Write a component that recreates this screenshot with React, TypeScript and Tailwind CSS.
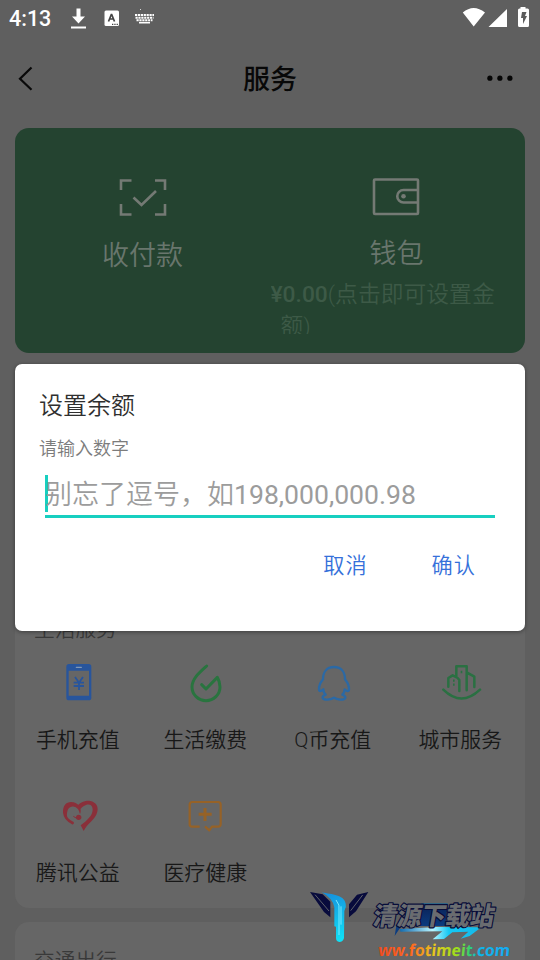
import React, { useState } from 'react'

const PhoneIcon = () => (
  <svg width="48" height="44" viewBox="164 153 144 132" fill="none">
    <path fillRule="evenodd" fill="#28559c" d="M206 162h59q8 0 8 8v93q0 8-8 8h-59q-8 0-8-8v-93q0-8 8-8zM205 182v75h61v-75z" />
    <path d="M228 172h15" stroke="#8298b5" strokeWidth="4" strokeLinecap="round" />
    <path d="M224 201l12 17 12-17M220 218h31M220 228h31M236 218v22" stroke="#28559c" strokeWidth="5.500" />
  </svg>
)

const DropIcon = () => (
  <svg width="48" height="44" viewBox="547 153 144 132" fill="none" stroke="#29743f" strokeWidth="9" strokeLinecap="round" strokeLinejoin="round">
    <path d="M621 168C600 187 577 206 577 231a42 41 0 0 0 84 0c0-12-3-21-8-29l-34 35-13-13" />
  </svg>
)

const PenguinIcon = () => (
  <svg width="48" height="44" viewBox="119 153 144 132" fill="none" stroke="#2b69a5" strokeWidth="7" strokeLinejoin="round" strokeLinecap="round">
    <path d="M191 171c-23 0-33 17-33 37-7 9-13 22-12 31 1 7 7 4 13-1 0 7 2 11 7 16-7 3-10 6-9 10 3 7 27 6 34-1 7 7 31 8 34 1 1-4-2-7-9-10 5-5 7-9 7-16 6 5 12 8 13 1 1-9-5-22-12-31 0-20-10-37-33-37z" />
  </svg>
)

const CityIcon = () => (
  <svg width="48" height="44" viewBox="502 153 144 132" fill="none" stroke="#2a7042" strokeWidth="7.500" strokeLinecap="round" strokeLinejoin="round">
    <path d="M521 239q54 53 110 0" />
    <path d="M536 230v-26l13-8 15 8 5 6v33M560 199v-30h31v72M591 187l23 13v31" />
    <path d="M573 186h5M550 212h5M550 224h5" strokeWidth="7" strokeLinecap="butt" />
  </svg>
)

const HeartIcon = () => (
  <svg width="48" height="44" viewBox="164 42 144 132">
    <path fill="none" stroke="#8a303a" strokeWidth="8" strokeLinecap="round" d="M217 129C203 122 193 110 192 97" />
    <path fill="#8a303a" d="M188 98C187 78 197 66 212 66c11 0 18 4 23 10 7 8 8 18 4 27-2-12-7-21-18-23-15-2-22 9-21 30zM232 77c8-10 25-16 38-14 17 3 25 17 21 32-6 25-31 35-41 58l-9-17c19-15 36-30 36-47 0-13-9-18-20-14-9 3-16 10-20 17 0-7-1-11-5-15z" />
    <circle cx="235" cy="112" r="8" fill="#8a303a" />
    <path d="M219 109q8 8 18 4" stroke="#8a303a" strokeWidth="3" fill="none" />
  </svg>
)

const MedicalIcon = () => (
  <svg width="48" height="44" viewBox="547 42 144 132" fill="none" stroke="#966227">
    <path d="M600 140h-23q-7 0-7-7V74q0-8 8-8h77q8 0 8 8v58q0 8-8 8h-18l-8 11-13-12" strokeWidth="6.500" strokeLinejoin="round" />
    <path d="M616 84v39M597 103h39" strokeWidth="9" />
  </svg>
)

const services = [
  { name: '手机充值', icon: <PhoneIcon /> },
  { name: '生活缴费', icon: <DropIcon /> },
  { name: 'Q币充值', icon: <PenguinIcon /> },
  { name: '城市服务', icon: <CityIcon /> },
  { name: '腾讯公益', icon: <HeartIcon /> },
  { name: '医疗健康', icon: <MedicalIcon /> },
]

const StatusBar = () => (
  <div className="flex h-[38px] shrink-0 items-center justify-between pl-[9px] pr-[9px] text-white">
    <div className="flex items-center">
      <span className="w-[62px] text-[21.500px] font-medium leading-[38px]">4:13</span>
      <svg width="86" height="38" viewBox="0 0 86 38" fill="white">
        <path d="M5.500 8.500h4v8h4.500L7.500 23.500 1 16.500h4.500zM0 26.500h15v2H0z" />
        <rect x="33.500" y="10.500" width="14.500" height="15.500" rx="1.500" />
        <path d="M37.500 21.500l2.800-7h.4l2.800 7M38.700 19h3.800" stroke="#444" strokeWidth="1.700" fill="none" />
        <path d="M41 24.300h6" stroke="#444" strokeWidth="1.200" strokeDasharray="1.300 1" />
        <path d="M64 15h19M64.500 17.700h18M65.500 20.300h16" stroke="white" strokeWidth="1.900" strokeDasharray="2.200 .7" />
        <path d="M68 22.700h11" stroke="white" strokeWidth="1.600" />
        <circle cx="69.500" cy="9.500" r=".5" />
      </svg>
    </div>
    <svg width="70" height="38" viewBox="0 0 70 38" fill="white">
      <path d="M1.800 12.500Q12.500 3.500 24 12.500L12.700 26.500zM46 9v18H27.500zM59.500 8.500v-1.500h5v1.500h2q1.500 0 1.500 1.500v15.500q0 1.500-1.500 1.500h-8q-1.500 0-1.500-1.500V10q0-1.500 1.500-1.500z" />
      <path d="M61 12h4.500l-1.500 4h2l-4 8v-6h-2z" fill="#5c5c5c" />
    </svg>
  </div>
)

const Watermark = () => (
  <svg className="absolute left-[300px] top-[880px] z-20" width="240" height="80" viewBox="0 0 720 240">
    <defs>
      <linearGradient id="url" x1="234" x2="630" y1="0" y2="0" gradientUnits="userSpaceOnUse">
        <stop offset="0" stopColor="#f04a20" />
        <stop offset=".25" stopColor="#ff6820" />
        <stop offset=".42" stopColor="#e8c51e" />
        <stop offset=".6" stopColor="#9be01c" />
        <stop offset=".69" stopColor="#35cf70" />
        <stop offset=".76" stopColor="#10b5e8" />
        <stop offset="1" stopColor="#18a9f5" />
      </linearGradient>
      <linearGradient id="stem" x1="60" x2="120" y1="40" y2="180" gradientUnits="userSpaceOnUse">
        <stop offset="0" stopColor="#168cdc" />
        <stop offset="1" stopColor="#10dff5" />
      </linearGradient>
      <linearGradient id="swoosh" x1="300" x2="545" y1="0" y2="0" gradientUnits="userSpaceOnUse">
        <stop offset="0" stopColor="#126cb0" />
        <stop offset=".4" stopColor="#b8f4ff" />
        <stop offset=".6" stopColor="#13c8f5" />
        <stop offset="1" stopColor="#16b9e8" />
      </linearGradient>
      <linearGradient id="plate" x1="0" x2="0" y1="68" y2="140" gradientUnits="userSpaceOnUse">
        <stop offset="0" stopColor="#1f6d96" />
        <stop offset=".3" stopColor="#0a2860" />
        <stop offset="1" stopColor="#0b3c80" />
      </linearGradient>
    </defs>
    <path d="M30 36l38 7 23 22v47L72 96zM205 36l-34 8-24 29v39l21-18z" fill="#080b3c" />
    <path d="M45 44l42 49M188 45l-36 47" stroke="#60636b" strokeWidth="3" />
    <path d="M65 37c32 7 67 7 72 34q3 10-4 22l-1 81q-3 12-14 12-10-1-10-12v-34l-5-1V82q-5-28-38-45z" fill="url(#stem)" />
    <path d="M108 60q13 14 9 33v72M123 79v55" stroke="#79eaff" strokeWidth="3" fill="none" />
    <path d="M365 70h78l-6 68H304l-20 30 5-32z" fill="url(#plate)" />
    <path d="M300 147l110-6 134 1-35 26-27 8 23-21-48 2-25 20-34 1 29-24-126 1z" fill="url(#swoosh)" />
    <text x="216" y="134" transform="translate(24 0) skewX(-10)" textLength="362" lengthAdjust="spacingAndGlyphs" fontSize="76" fontWeight="900" fill="#6a6c70" stroke="#080d39" strokeWidth="7" strokeLinejoin="round" paintOrder="stroke" fontFamily="Noto Sans CJK SC, sans-serif">清源下载站</text>
    <text x="234" y="228" transform="translate(23 0) skewX(-6)" textLength="396" lengthAdjust="spacingAndGlyphs" fontSize="49" fontWeight="700" fill="url(#url)" fontFamily="Noto Sans, sans-serif">ww.fotimeit.com</text>
  </svg>
)

const App = () => {
  const [open, setOpen] = useState(true)

  return (
    <div className="relative flex h-[960px] w-[540px] flex-col overflow-hidden bg-[#5f5f5f] font-[Roboto,'Noto_Sans_CJK_SC',sans-serif] font-[350]">
      <StatusBar />

      <header className="flex h-[90px] shrink-0 items-start justify-between px-[17px] pt-[21px]">
        <svg width="40" height="40" viewBox="0 0 40 40" fill="none" stroke="#090909" strokeWidth="2.200">
          <path d="M14.500 8.500L3 19.700l11.500 11" />
        </svg>
        <h1 className="pt-px text-[27px] font-medium leading-10 text-[#080808]">服务</h1>
        <svg width="40" height="40" viewBox="0 0 40 40" fill="#050505">
          <circle cx="6.900" cy="19.200" r="2.600" />
          <circle cx="16.900" cy="19.200" r="2.600" />
          <circle cx="26.900" cy="19.200" r="2.600" />
        </svg>
      </header>

      <section className="mx-[15px] grid h-[225px] shrink-0 grid-cols-2 rounded-[14px] bg-[#244330] text-[#69766d]">
        <div className="flex flex-col items-center pt-[49px]">
          <svg width="48" height="40" viewBox="0 0 48 40" fill="none" stroke="#747a74" strokeWidth="2.600">
            <path d="M2 13V3.500h10.500M36 3.500h10V13M46 27v10.500H36M12.500 37.500H2V27M14.500 20.500l8 7.500L37 14" />
          </svg>
          <span className="mt-[19px] text-[27px] leading-10">收付款</span>
        </div>
        <div className="flex flex-col items-center pr-[3px] pt-[48px]">
          <svg width="48" height="40" viewBox="0 0 48 40" fill="none" stroke="#747a74" strokeWidth="2.600">
            <rect x="2" y="3.500" width="44" height="34.500" rx="1" />
            <path d="M46 14H31.500a6 6 0 0 0 0 12.500H46" />
            <circle cx="31.500" cy="20.300" r="2.300" fill="#747a74" stroke="none" />
          </svg>
          <span className="ml-px mt-[18px] text-[27px] leading-10">钱包</span>
          <div className="ml-px mt-[5px] h-[55px] w-[252px] overflow-hidden text-[22.800px] leading-[32px] text-[#3d5a47]">
            <p className="whitespace-nowrap"><span className="font-medium">¥0.00</span>(点击即可设置金</p>
            <p className="pl-[10px]">额)</p>
          </div>
        </div>
      </section>

      <section className="mx-[15px] mt-[12px] flex h-[543px] shrink-0 flex-col justify-end rounded-[14px] bg-[#666666] pb-[20px]">
        <h2 className="pl-[19px] text-[20.700px] leading-[30px] text-[#393939]">生活服务</h2>
        <div className="mt-[16px] grid grid-cols-4 gap-y-[39px]">
          {services.map((item) => (
            <div key={item.name} className="flex flex-col items-center">
              {item.icon}
              <span className="mt-[20px] -ml-0.5 text-[20.900px] leading-[30px] text-[#181818]">{item.name}</span>
            </div>
          ))}
        </div>
      </section>

      <section className="mx-[15px] mt-[14px] h-[200px] shrink-0 rounded-[14px] bg-[#666666] pl-[19px] pt-[24px]">
        <h2 className="text-[20.700px] leading-[30px] text-[#393939]">交通出行</h2>
      </section>

      {open && (
        <div className="absolute inset-x-[15px] top-[364px] z-10 h-[267px] rounded-[7px] bg-white pl-[24px] pt-[24px] shadow-[0_1px_4px_rgba(0,0,0,0.4)]">
          <h3 className="text-[24px] leading-9 text-[#2f2f2f]">设置余额</h3>
          <p className="mt-[12px] text-[18px] leading-[26px] text-[#7c7c7c]">请输入数字</p>
          <div className="ml-[6px] mt-[13px] flex h-[43px] w-[450px] items-start border-b-[3px] border-[#17cfc0]">
            <span className="mr-[-3px] h-[37px] w-[3px] bg-[#17cfc0]" />
            <span className="whitespace-nowrap pt-px text-[27px] leading-[38px] text-[#9c9c9c]">别忘了逗号，如<span className="text-[26.600px] font-normal">198,000,000.98</span></span>
          </div>
          <div className="mt-[32px] flex justify-end gap-[64px] pr-[49px] text-[21.200px] leading-8 tracking-[1px] text-[#3570da]">
            <button onClick={() => setOpen(false)}>取消</button>
            <button onClick={() => setOpen(false)}>确认</button>
          </div>
        </div>
      )}

      <Watermark />
    </div>
  )
}

export default App
